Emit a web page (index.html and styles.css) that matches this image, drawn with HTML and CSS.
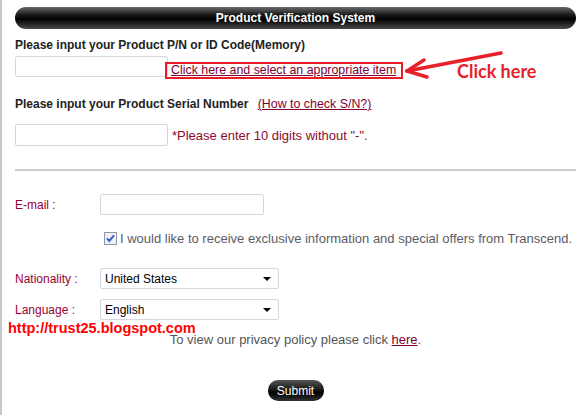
FILE: index.html
```html
<!DOCTYPE html>
<html>
	<head>
		<meta charset="UTF-8">
		<title>Product Verification System</title>
		<link rel="stylesheet" href="styles.css">
	</head>
	<body>
		<div class="page">
			<div class="title">Product Verification System</div>

			<p class="ask">Please input your Product P/N or ID Code(Memory)</p>
			<div class="line">
				<input type="text" class="txt" id="pn" value="" />
				<a href="#" class="pick">Click here and select an appropriate item</a>
			</div>

			<p class="ask ask2">Please input your Product Serial Number <a href="#" class="howto">(How to check S/N?)</a></p>
			<div class="line line2">
				<input type="text" class="txt txt2" id="sn" value="" />
				<span class="hint">*Please enter 10 digits without "-".</span>
			</div>

			<div class="rule"></div>

			<div class="row row_mail">
				<label class="lab" for="email">E-mail :</label>
				<input type="text" class="txt mail" id="email" value="" />
			</div>
			<div class="agree">
				<span class="check">
					<svg width="13" height="13" viewBox="0 0 13 13">
						<rect x="0.5" y="0.5" width="12" height="12" fill="#eef0f4" stroke="#8f98a8"/>
						<path d="M3 6.3 L5.3 9 L10 3.4" fill="none" stroke="#3a5fbf" stroke-width="2"/>
					</svg>
				</span>
				I would like to receive exclusive information and special offers from Transcend.
			</div>
			<div class="row row_nat">
				<label class="lab">Nationality :</label>
				<span class="sel"><select><option>United States</option></select></span>
			</div>
			<div class="row row_lang">
				<label class="lab">Language :</label>
				<span class="sel"><select><option>English</option></select></span>
			</div>

			<p class="privacy">To view our privacy policy please click <a href="#">here</a>.</p>
			<div class="btn_box"><input type="button" value="Submit" class="submit"/></div>

			<!-- annotations drawn over the page -->
			<svg class="arrow" width="582" height="100" viewBox="0 0 582 100">
				<g stroke="#e8202a" stroke-width="3.5" stroke-linecap="round" fill="none">
					<path d="M407 71 L501 53"/>
					<path d="M407 71 L424 60"/>
					<path d="M407 71 L427 77"/>
				</g>
			</svg>
			<span class="click_note">Click here</span>
			<span class="blog">http://trust25.blogspot.com</span>
		</div>
	</body>
</html>
```

FILE: styles.css
```css
*{
	padding: 0;
	margin: 0;
}
body{
	font-family: "Liberation Sans", Arial, sans-serif;
	font-size: 12px;
	background: #fff;
}
.page{
	position: relative;
	height: 415px;
	box-sizing: border-box;
	border-left: 2px solid #c8c8c8;
	padding: 7px 6px 0 13px;
}
.title{
	height: 22px;
	line-height: 22px;
	border-radius: 11px;
	text-align: center;
	color: #fff;
	font-weight: bold;
	background: linear-gradient(#6a6a6a, #1a1a1a 35%, #000 55%, #202020 75%, #4a4a4a);
}
.ask{
	margin-top: 9px;
	line-height: 14px;
	font-weight: bold;
	color: #222;
}
.ask2{
	margin-top: 18px;
}
.howto{
	margin-left: 6px;
	font-weight: normal;
	font-size: 12.4px;
	color: #800033;
}
.line{
	display: flex;
	align-items: flex-start;
	margin-top: 4px;
}
.line2{
	margin-top: 13px;
	align-items: center;
}
.txt{
	width: 153px;
	height: 21px;
	box-sizing: border-box;
	border: 1px solid #d4d8e0;
	border-radius: 2px;
	outline: none;
	background: #fff;
}
.txt2{
	height: 22px;
}
.pick{
	margin: 6px 0 0 -3px;
	padding: 0 5px 0 4px;
	height: 17px;
	line-height: 13px;
	box-sizing: border-box;
	border: 2px solid #ec1c24;
	font-size: 12.4px;
	color: #800033;
}
.hint{
	margin-left: 4px;
	font-size: 13px;
	color: #8c0b30;
}
.rule{
	height: 2px;
	margin-top: 23px;
	background: #cccccc;
}
.row{
	display: flex;
	align-items: center;
}
.row_mail{
	margin-top: 23px;
}
.row_nat{
	margin-top: 22px;
}
.row_lang{
	margin-top: 10px;
}
.lab{
	width: 85px;
	color: #990033;
}
.mail{
	width: 164px;
}
.agree{
	display: flex;
	align-items: center;
	margin-top: 16px;
	padding-left: 89px;
	line-height: 15px;
	font-size: 13px;
	color: #5c5c66;
}
.check{
	display: flex;
	margin-right: 3px;
}
.sel{
	position: relative;
	display: inline-block;
}
.sel select{
	width: 179px;
	height: 21px;
	padding-left: 4px;
	border: 1px solid #d4d8e0;
	border-radius: 2px;
	outline: none;
	appearance: none;
	background: #fff;
	font-family: "Liberation Sans", Arial, sans-serif;
	font-size: 12px;
	color: #000;
}
.sel::after{
	content: "";
	position: absolute;
	right: 8px;
	top: 9px;
	border-left: 4px solid transparent;
	border-right: 4px solid transparent;
	border-top: 4px solid #000;
}
.privacy{
	margin-top: 12px;
	line-height: 15px;
	text-align: center;
	font-size: 13px;
	color: #555;
}
.privacy a{
	color: #800033;
}
.btn_box{
	margin-top: 33px;
	text-align: center;
}
.submit{
	width: 56px;
	height: 21px;
	border: none;
	border-radius: 10px;
	outline: none;
	cursor: pointer;
	color: #fff;
	font-family: "Liberation Sans", Arial, sans-serif;
	font-size: 12px;
	background: linear-gradient(#555, #1a1a1a 45%, #000 60%, #333);
}
.arrow{
	position: absolute;
	left: -2px;
	top: 0;
	pointer-events: none;
}
.click_note{
	position: absolute;
	left: 455px;
	top: 61px;
	line-height: 20px;
	font-family: Lato, "Open Sans", sans-serif;
	font-weight: bold;
	font-size: 18px;
	color: #e8202a;
}
.blog{
	position: absolute;
	left: 6px;
	top: 320px;
	line-height: 17px;
	font-weight: bold;
	font-size: 14.5px;
	color: #ff0000;
}
```
